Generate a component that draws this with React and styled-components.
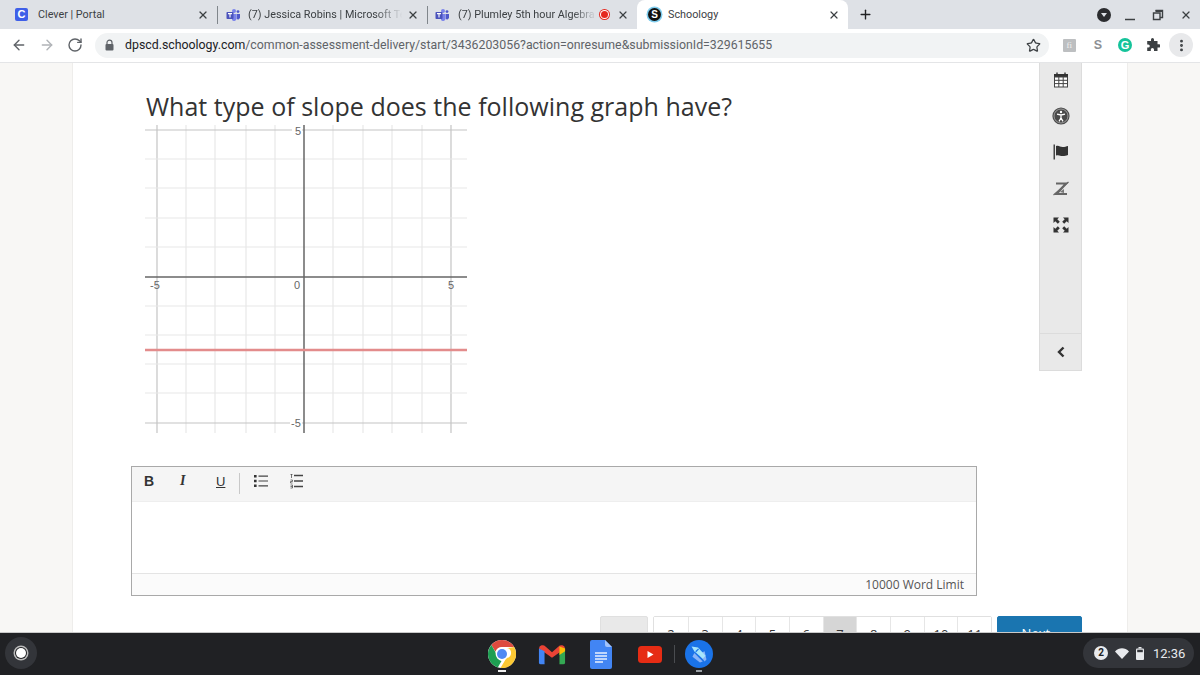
import styled, { createGlobalStyle } from 'styled-components';
import { ArrowLeft, ArrowRight, RotateCw, Star, Plus, X, MoreVertical } from 'lucide-react';

const Global = createGlobalStyle`
  html, body { margin: 0; padding: 0; height: 100%; overflow: hidden; }
  body { font-family: "Liberation Sans", Arial, sans-serif; background: #fff; }
`;

const Screen = styled.div`
  width: 1200px;
  height: 675px;
  display: flex;
  flex-direction: column;
  overflow: hidden;
`;

/* ---------- tab strip ---------- */
const TabStrip = styled.div`
  height: 29px;
  flex: none;
  display: flex;
  align-items: stretch;
  background: #dee1e6;
`;

const Tab = styled.div`
  width: ${p => p.$width}px;
  flex: none;
  box-sizing: border-box;
  display: flex;
  align-items: center;
  padding: 0 8px 0 ${p => p.$pad}px;
  position: relative;
  background: ${p => (p.$active ? '#fff' : 'transparent')};
  border-radius: ${p => (p.$active ? '8px 8px 0 0' : '0')};
  &::after {
    content: '';
    display: ${p => (p.$sep ? 'block' : 'none')};
    position: absolute;
    right: 0;
    top: 6px;
    bottom: 5px;
    width: 1px;
    background: #80868b;
  }
`;

const TabTitle = styled.span`
  flex: 1;
  min-width: 0;
  margin-left: ${p => p.$gap}px;
  font: 10.8px Roboto, sans-serif;
  color: #3c4043;
  white-space: nowrap;
  overflow: hidden;
  ${p => p.$fade && 'mask-image: linear-gradient(90deg, #000 80%, transparent 97%);'}
`;

const TabClose = styled(X)`
  flex: none;
  width: 12px;
  height: 12px;
  color: #3c4043;
  stroke-width: 2.4;
  margin-right: ${p => p.$right || 0}px;
`;

const TabIcon = styled.svg`
  flex: none;
`;

const CleverIcon = styled.span`
  width: 13px;
  height: 13px;
  flex: none;
  border-radius: 2px;
  background: #3f5fe8;
  color: #fff;
  font: bold 11px/13px "Liberation Sans", sans-serif;
  text-align: center;
`;

const SchoologyIcon = styled.span`
  width: 13px;
  height: 13px;
  flex: none;
  border-radius: 50%;
  background: #111;
  box-shadow: 0 0 0 1.5px #7fcdee;
  color: #fff;
  font: bold 10px/13px "Liberation Sans", sans-serif;
  text-align: center;
`;

const RecordDot = styled.span`
  width: 7px;
  height: 7px;
  flex: none;
  margin-right: 9px;
  border-radius: 50%;
  background: #e5281f;
  box-shadow: 0 0 0 1px #fff, 0 0 0 2px #e5281f;
`;

const NewTab = styled(Plus)`
  width: 15px;
  height: 15px;
  margin: 7px 0 0 10px;
  color: #202124;
  stroke-width: 2.2;
`;

const WindowControls = styled.div`
  margin-left: auto;
  display: flex;
  align-items: center;
  padding-right: 8px;
  gap: 16px;
`;

const ProfileDot = styled.span`
  width: 14px;
  height: 14px;
  border-radius: 50%;
  background: #2b2c2f;
  position: relative;
  margin-right: -3px;
  &::after {
    content: '';
    position: absolute;
    left: 3.5px;
    top: 5px;
    border-left: 3.5px solid transparent;
    border-right: 3.5px solid transparent;
    border-top: 4.5px solid #dee1e6;
  }
`;

/* ---------- toolbar ---------- */
const Toolbar = styled.div`
  height: 34px;
  flex: none;
  box-sizing: border-box;
  display: flex;
  align-items: center;
  background: #fff;
  border-bottom: 1px solid #e4e5e7;
  padding: 0 7px 1px 11px;
`;

const NavButton = styled.span`
  width: 16px;
  height: 16px;
  flex: none;
  margin-right: ${p => p.$right}px;
  color: ${p => p.$color};
  display: flex;
  svg { width: 16px; height: 16px; stroke-width: 2.1; }
`;

const Omnibox = styled.div`
  width: 954px;
  height: 25px;
  flex: none;
  box-sizing: border-box;
  margin-left: 4px;
  display: flex;
  align-items: center;
  padding: 0 8px 0 9px;
  border-radius: 13px;
  background: #f1f3f4;
`;

const Url = styled.span`
  margin-left: 10px;
  flex: 1;
  font: 12.33px Roboto, sans-serif;
  color: #5f6368;
  white-space: nowrap;
  b { font-weight: 400; color: #202124; }
`;

const BookmarkStar = styled(Star)`
  width: 15px;
  height: 15px;
  color: #3c4043;
  stroke-width: 2;
`;

const Extensions = styled.div`
  margin-left: auto;
  display: flex;
  align-items: center;
`;

const ExtFi = styled.span`
  width: 13px;
  height: 13px;
  border-radius: 1px;
  background: #bdbfc1;
  color: #f1f1f1;
  font: 9px/13px "Liberation Serif", serif;
  text-align: center;
  margin-right: 18px;
`;

const ExtS = styled.span`
  font: bold 12.5px/14px "Liberation Sans", sans-serif;
  color: #8d9094;
  margin-right: 16px;
`;

const ExtGrammarly = styled.span`
  width: 14px;
  height: 14px;
  border-radius: 50%;
  background: #15c39a;
  color: #fff;
  font: bold 11px/14px "Liberation Sans", sans-serif;
  text-align: center;
  margin-right: 14px;
`;

const MenuButton = styled.span`
  width: 24px;
  height: 24px;
  margin-left: 9px;
  border-radius: 50%;
  background: #e8e9eb;
  color: #3c4043;
  display: flex;
  align-items: center;
  justify-content: center;
  svg { width: 15px; height: 15px; stroke-width: 2.6; }
`;

/* ---------- page ---------- */
const Page = styled.div`
  flex: 1;
  min-height: 0;
  display: flex;
  overflow: hidden;
`;

const Gutter = styled.div`
  flex: 1;
  background: #f8f7f5;
  border-${p => p.$side}: 1px solid #eeedeb;
`;

const Main = styled.main`
  width: 1054px;
  flex: none;
  box-sizing: border-box;
  padding-left: 58px;
  background: #fff;
  display: grid;
  grid-template-columns: 846px 43px;
  column-gap: 62px;
  align-content: start;
`;

const Work = styled.div`
  display: flex;
  flex-direction: column;
`;

const Question = styled.h1`
  margin: 26px 0 0 15px;
  font: 400 25px/34px "Open Sans", sans-serif;
  letter-spacing: 0.02px;
  color: #333;
  white-space: nowrap;
`;

const Graph = styled.svg`
  display: block;
  margin: 0 0 0 14px;
  width: 322px;
  height: 312px;
`;

const Editor = styled.div`
  margin-top: 31px;
  height: 130px;
  box-sizing: border-box;
  border: 1px solid #a9a9a9;
  display: flex;
  flex-direction: column;
`;

const EditorBar = styled.div`
  height: 35px;
  flex: none;
  box-sizing: border-box;
  display: flex;
  align-items: flex-start;
  background: #f5f5f5;
  border-bottom: 1px solid #eee;
  padding: 6px 0 0 12px;
`;

const EditorButton = styled.span`
  width: ${p => p.$width}px;
  height: 16px;
  flex: none;
  display: flex;
  align-items: center;
  color: #333;
  font: ${p => p.$font};
  text-decoration: ${p => (p.$under ? 'underline' : 'none')};
`;

const EditorSep = styled.span`
  width: 1px;
  height: 21px;
  flex: none;
  background: #c8c8c8;
  margin-right: 14px;
`;

const EditorBody = styled.div`
  flex: 1;
  background: #fff;
`;

const EditorFooter = styled.div`
  height: 22px;
  flex: none;
  box-sizing: border-box;
  border-top: 1px solid #e4e4e4;
  background: #fbfbfb;
  font: 12px/21px "Open Sans", sans-serif;
  color: #555;
  text-align: right;
  padding-right: 12px;
`;

const ToolRail = styled.aside`
  align-self: start;
  height: 308px;
  box-sizing: border-box;
  display: flex;
  flex-direction: column;
  align-items: center;
  background: #e9e9e9;
  border: 1px solid #dcdcdc;
  border-top: 0;
`;

const RailTools = styled.div`
  flex: 1;
  padding-top: 9px;
  display: flex;
  flex-direction: column;
  align-items: center;
  gap: 19px;
`;

const RailIcon = styled.svg`
  width: ${p => p.$size || 16}px;
  height: ${p => p.$size || 16}px;
  display: block;
  margin-top: ${p => p.$nudge || 0}px;
`;

const RailToggle = styled.div`
  align-self: stretch;
  height: 36px;
  flex: none;
  border-top: 1px solid #dcdcdc;
  display: flex;
  align-items: center;
  justify-content: center;
`;

const Pager = styled.nav`
  grid-column: 1 / -1;
  justify-self: end;
  margin-top: 20px;
  display: flex;
  height: 40px;
  gap: 5px;
`;

const PagerButton = styled.span`
  width: ${p => p.$width}px;
  box-sizing: border-box;
  border: 1px solid ${p => (p.$primary ? '#1a75b0' : '#e0e0e0')};
  border-radius: 2px;
  background: ${p => (p.$primary ? '#1a75b0' : '#e9e9e9')};
  color: ${p => (p.$primary ? '#fff' : '#333')};
  font: 13px/32px "Open Sans", sans-serif;
  text-align: center;
`;

const Pages = styled.div`
  display: flex;
  border: 1px solid #e0e0e0;
  border-radius: 2px;
`;

const PageNo = styled.span`
  width: 33.7px;
  box-sizing: border-box;
  border-left: ${p => (p.$first ? '0' : '1px solid #e6e6e6')};
  background: ${p => (p.$current ? '#d6d6d6' : '#fff')};
  color: #333;
  font: 13px/34px "Open Sans", sans-serif;
  text-align: center;
`;

/* ---------- shelf ---------- */
const Shelf = styled.footer`
  height: 43px;
  flex: none;
  box-sizing: border-box;
  display: flex;
  align-items: center;
  background: #202124;
  border-top: 1px solid #c9c9c9;
`;

const Launcher = styled.span`
  width: 32px;
  height: 32px;
  margin: 0 0 2px 5px;
  flex: none;
  border-radius: 50%;
  background: #33353a;
  display: flex;
  align-items: center;
  justify-content: center;
  &::after {
    content: '';
    width: 10px;
    height: 10px;
    border-radius: 50%;
    background: #fff;
    box-shadow: 0 0 0 1px #202124, 0 0 0 2.5px #bbb;
  }
`;

const Apps = styled.div`
  margin-left: 451px;
  display: flex;
  align-items: center;
`;

const AppSlot = styled.span`
  width: 28px;
  height: 36px;
  flex: none;
  margin-right: ${p => p.$right}px;
  position: relative;
  display: flex;
  align-items: center;
  justify-content: center;
  &::after {
    content: '';
    display: ${p => (p.$open ? 'block' : 'none')};
    position: absolute;
    bottom: 0;
    left: ${p => (p.$open === 'wide' ? 10 : 11)}px;
    width: ${p => (p.$open === 'wide' ? 8 : 6)}px;
    height: 2px;
    background: ${p => (p.$open === 'wide' ? '#eee' : '#9aa0a6')};
  }
`;

const AppDivider = styled.span`
  width: 1px;
  height: 18px;
  flex: none;
  background: #4a4c50;
  margin-right: 10px;
`;

const StatusPill = styled.div`
  margin: 0 6px 2px auto;
  width: 111px;
  height: 30px;
  box-sizing: border-box;
  border-radius: 15px;
  background: #33353a;
  display: flex;
  align-items: center;
  gap: 7px;
  padding-left: 11px;
`;

const Badge = styled.span`
  width: 14px;
  height: 14px;
  flex: none;
  border-radius: 50%;
  background: #e8eaed;
  color: #202124;
  font: bold 10px/14px Roboto, sans-serif;
  text-align: center;
`;

const Clock = styled.span`
  margin-left: 2px;
  font: 13px Roboto, sans-serif;
  color: #e8eaed;
`;

/* ---------- drawings ---------- */
const TeamsIcon = () => (
  <TabIcon width="14" height="14" viewBox="0 0 14 14">
    <circle cx="8" cy="3" r="2" fill="#7b83eb" />
    <circle cx="12" cy="3.6" r="1.4" fill="#5059c9" />
    <path d="M6 6h4.5v5a2.5 2.5 0 0 1-4.5 1z" fill="#7b83eb" />
    <path d="M10.8 6H14v3.6a2 2 0 0 1-3.2 1.4z" fill="#5059c9" />
    <rect x="0.5" y="4" width="7" height="7" rx="0.8" fill="#4b53bc" />
    <path d="M2 5.6h4M4 5.6v4" stroke="#fff" strokeWidth="1.1" />
  </TabIcon>
);

const LockIcon = () => (
  <TabIcon width="11" height="12" viewBox="0 0 11 12">
    <path d="M3 5.5V3.6a2.5 2.5 0 0 1 5 0v1.9" fill="none" stroke="#5f6368" strokeWidth="1.2" />
    <rect x="1.5" y="5" width="8" height="6.5" rx="1" fill="#5f6368" />
  </TabIcon>
);

const PuzzleIcon = () => (
  <svg width="14" height="14" viewBox="0 0 14 14">
    <path d="M5 1.5a1.5 1.5 0 0 1 3 0V3h3.5v3.2H13a1.6 1.6 0 0 1 0 3.2h-1.5V13H8v-1.5a1.6 1.6 0 0 0-3.2 0V13H1.2V9.6h1a1.6 1.6 0 0 0 0-3.2h-1V3H5z" fill="#3c4043" />
  </svg>
);

const RestoreIcon = () => (
  <svg width="12" height="12" viewBox="0 0 12 12">
    <path d="M3.5 1.5h7v7h-2M1.5 4h6.5v6.5H1.5z" fill="none" stroke="#3c4043" strokeWidth="1.4" />
    <rect x="3.5" y="1" width="7.5" height="2" fill="#3c4043" />
  </svg>
);

const CalendarIcon = () => (
  <RailIcon viewBox="0 0 16 16">
    <path d="M4 0.5v3M12 0.5v3" stroke="#333" strokeWidth="1.4" />
    <rect x="1" y="2" width="14" height="3" fill="#333" />
    <rect x="1.5" y="5" width="13" height="10" fill="#fff" stroke="#444" />
    <path d="M1.5 8.3h13M1.5 11.6h13M5.8 5v10M10.2 5v10" stroke="#444" />
  </RailIcon>
);

const AccessIcon = () => (
  <RailIcon $size={18} viewBox="0 0 18 18">
    <circle cx="9" cy="9" r="8.6" fill="#4a4a4a" />
    <circle cx="9" cy="9" r="7" fill="none" stroke="#bbb" strokeWidth="0.7" />
    <circle cx="9" cy="5" r="1.2" fill="#fff" />
    <path d="M5 7.2l4 .8 4-.8M9 8v3M9 11l-2 3.4M9 11l2 3.4" fill="none" stroke="#fff" strokeWidth="1.3" />
  </RailIcon>
);

const FlagIcon = () => (
  <RailIcon viewBox="0 0 16 16">
    <rect x="0.5" y="0.5" width="1.5" height="15" fill="#444" />
    <path d="M3 2c3-1 4 1 6.5 1S13 2.4 15 2v9c-2 .6-3 1-5.5 1S6 10.5 3 11.5z" fill="#333" />
  </RailIcon>
);

const LineReaderIcon = () => (
  <RailIcon $nudge={2} viewBox="0 0 16 16">
    <path d="M3 2.5h10L3.500 13H14" fill="none" stroke="#666" strokeWidth="2.2" />
    <path d="M0.5 14L15.500 1" stroke="#666" strokeWidth="1.2" />
    <path d="M7 11l4-3v4z" fill="#777" />
  </RailIcon>
);

const ExpandIcon = () => (
  <RailIcon $nudge={1} viewBox="0 0 16 16">
    <path d="M0.5 0.5H6L4.300 2.300l2.500 2.500-2 2-2.500-2.500L0.500 6z" fill="#333" />
    <path d="M15.500 0.500H10l1.700 1.800-2.500 2.500 2 2 2.500-2.500L15.500 6z" fill="#333" />
    <path d="M0.500 15.500H6l-1.700-1.800 2.500-2.500-2-2-2.500 2.500L0.500 10z" fill="#333" />
    <path d="M15.500 15.500H10l1.700-1.800-2.500-2.500 2-2 2.500 2.500L15.500 10z" fill="#333" />
  </RailIcon>
);

const ChevronIcon = () => (
  <svg width="8" height="12" viewBox="0 0 8 12">
    <path d="M6.500 1.500L2 6l4.500 4.500" fill="none" stroke="#333" strokeWidth="2.4" />
  </svg>
);

const ListIcon = () => (
  <svg width="14" height="14" viewBox="0 0 14 14">
    <path d="M0 1h2.600v2.400H0zM0 5.800h2.600v2.400H0zM0 10.600h2.600V13H0z" fill="#333" />
    <path d="M4.500 2.200H14M4.500 7H14M4.500 11.800H14" stroke="#444" strokeWidth="1.2" />
  </svg>
);

const OrderedIcon = () => (
  <svg width="13" height="16" viewBox="0 0 13 16">
    <path d="M0.500 1.500h2M1.500 1v4M0.500 7h2v1.500h-2V10h2M0.500 12h2v3h-2M0.500 13.500h2" fill="none" stroke="#555" strokeWidth="0.8" />
    <path d="M4 2.500h9M4 8h9M4 13.500h9" stroke="#444" strokeWidth="1.3" />
  </svg>
);

const ChromeIcon = () => (
  <svg width="28" height="28" viewBox="0 0 28 28">
    <circle cx="14" cy="14" r="14" fill="#fff" />
    <path d="M14 0a14 14 0 0 1 12.100 7H14a7 7 0 0 0-6.600 4.700L3.400 4.900A14 14 0 0 1 14 0z" fill="#dd4b3e" />
    <path d="M3.400 4.900l5.900 10.600a5 5 0 0 0 4.200 5.400L9.800 27.400A14 14 0 0 1 3.400 4.900z" fill="#1e9e52" />
    <path d="M26.100 7A14 14 0 0 1 12.500 28l5.900-10a5 5 0 0 0 .6-9.900z" fill="#fcc934" />
    <circle cx="14" cy="14" r="6.400" fill="#fff" />
    <circle cx="14" cy="14" r="5" fill="#4f89f3" />
  </svg>
);

const GmailIcon = () => (
  <svg width="30" height="24" viewBox="0 0 30 24">
    <path d="M1 6a4 4 0 0 1 7-2l7 6 7-6a4 4 0 0 1 7 2L15 16z" fill="#ea4335" />
    <path d="M1 6v15a2 2 0 0 0 2 2h4V9z" fill="#4285f4" />
    <path d="M29 6v15a2 2 0 0 1-2 2h-4V9z" fill="#34a853" />
    <path d="M23 4l6 2v3l-6 4z" fill="#fbbc04" />
  </svg>
);

const DocsIcon = () => (
  <svg width="22" height="29" viewBox="0 0 22 29">
    <path d="M2 0h13l7 7v20a2 2 0 0 1-2 2H2a2 2 0 0 1-2-2V2a2 2 0 0 1 2-2z" fill="#4285f4" />
    <path d="M15 0l7 7h-5a2 2 0 0 1-2-2z" fill="#a1c2fa" />
    <path d="M5 13h12M5 16h12M5 19h12M5 22h8" stroke="#e8f0fe" strokeWidth="1.3" />
  </svg>
);

const YoutubeIcon = () => (
  <svg width="24" height="17" viewBox="0 0 24 17">
    <rect width="24" height="17" rx="3.500" fill="#e62c14" />
    <path d="M9.500 5l6 3.500-6 3.500z" fill="#fff" />
  </svg>
);

const RocketIcon = () => (
  <svg width="30" height="30" viewBox="0 0 30 30">
    <circle cx="15" cy="15" r="15" fill="#1a73e8" />
    <path d="M10 14l9 9-3 1-8-6z" fill="#8ab4f8" />
    <path d="M15 15l6-3 2 9-2 2z" fill="#8ab4f8" />
    <path d="M7 7l7 1 8 9-3 3-9-8z" fill="#a6e5fb" />
    <path d="M11 12l3-3 1 1-3 3z" fill="#1a73e8" />
  </svg>
);

const WifiIcon = () => (
  <svg width="14" height="11" viewBox="0 0 14 11">
    <path d="M0 3.400C4-.8 10-.8 14 3.400L7 11z" fill="#e8eaed" />
  </svg>
);

const BatteryIcon = () => (
  <svg width="8" height="13" viewBox="0 0 8 13">
    <rect x="2.500" width="3" height="1.500" fill="#e8eaed" />
    <rect y="1.500" width="8" height="11.500" rx="1" fill="#e8eaed" />
    <rect x="1.200" y="2.700" width="5.600" height="2.500" fill="#33353a" />
  </svg>
);

/* ---------- graph data ---------- */
const xLines = [157, 186, 215, 246, 275, 333, 363, 392, 422, 451];
const yLines = [130, 159, 188, 218, 247, 306, 335, 364, 393, 423];
const GX = 145;
const GY = 123;

const GraphPlot = () => (
  <Graph viewBox="145 123 322 312">
    {xLines.map(x => (
      <line
        key={x}
        x1={x} x2={x} y1={GY + 2} y2={GY + 310}
        stroke={x === 157 || x === 451 ? '#c4c4c4' : '#e8e8e8'}
        strokeWidth="1.2"
      />
    ))}
    {yLines.map(y => (
      <line
        key={y}
        x1={GX} x2={GX + 322} y1={y} y2={y}
        stroke={y === 130 || y === 423 ? '#c4c4c4' : '#e8e8e8'}
        strokeWidth="1.2"
      />
    ))}
    <line x1="304" x2="304" y1={GY + 2} y2={GY + 310} stroke="#666" strokeWidth="1.5" />
    <line x1={GX} x2={GX + 322} y1="277" y2="277" stroke="#666" strokeWidth="1.5" />
    <line x1={GX} x2={GX + 322} y1="350" y2="350" stroke="#e38c8c" strokeWidth="2.6" />
    <g fontFamily="Liberation Sans, sans-serif" fontSize="11" fill="#666">
      <rect x="292" y="125" width="10" height="11" fill="#fff" />
      <text x="295" y="135">5</text>
      <text x="150" y="289">-5</text>
      <text x="294" y="289">0</text>
      <text x="448" y="289">5</text>
      <rect x="290" y="417" width="12" height="11" fill="#fff" />
      <text x="291" y="427">-5</text>
    </g>
  </Graph>
);

const pageNumbers = [2, 3, 4, 5, 6, 7, 8, 9, 10, 11];

export default function App() {
  return (
    <>
      <Global />
      <Screen>
        <TabStrip>
          <Tab $width={218} $pad={15} $sep>
            <CleverIcon>C</CleverIcon>
            <TabTitle $gap={10}>Clever | Portal</TabTitle>
            <TabClose $right={1} />
          </Tab>
          <Tab $width={210} $pad={8} $sep>
            <TeamsIcon />
            <TabTitle $gap={8} $fade>(7) Jessica Robins | Microsoft Teams</TabTitle>
            <TabClose $right={1} />
          </Tab>
          <Tab $width={209} $pad={7}>
            <TeamsIcon />
            <TabTitle $gap={9} $fade>(7) Plumley 5th hour Algebra</TabTitle>
            <RecordDot />
            <TabClose $right={0} />
          </Tab>
          <Tab $width={211} $pad={11} $active>
            <SchoologyIcon>S</SchoologyIcon>
            <TabTitle $gap={7}>Schoology</TabTitle>
            <TabClose $right={0} />
          </Tab>
          <NewTab />
          <WindowControls>
            <ProfileDot />
            <svg width="12" height="12" viewBox="0 0 12 12"><path d="M1 10.5h10" stroke="#3c4043" strokeWidth="1.5" /></svg>
            <RestoreIcon />
            <TabClose />
          </WindowControls>
        </TabStrip>

        <Toolbar>
          <NavButton $right={12} $color="#5f6368"><ArrowLeft /></NavButton>
          <NavButton $right={12} $color="#b0b3b7"><ArrowRight /></NavButton>
          <NavButton $right={8} $color="#5f6368"><RotateCw /></NavButton>
          <Omnibox>
            <LockIcon />
            <Url><b>dpscd.schoology.com</b>/common-assessment-delivery/start/3436203056?action=onresume&amp;submissionId=329615655</Url>
            <BookmarkStar />
          </Omnibox>
          <Extensions>
            <ExtFi>fi</ExtFi>
            <ExtS>S</ExtS>
            <ExtGrammarly>G</ExtGrammarly>
            <PuzzleIcon />
            <MenuButton><MoreVertical /></MenuButton>
          </Extensions>
        </Toolbar>

        <Page>
          <Gutter $side="right" />
          <Main>
            <Work>
              <Question>What type of slope does the following graph have?</Question>
              <GraphPlot />
              <Editor>
                <EditorBar>
                  <EditorButton $width={36} $font='bold 14px "Liberation Sans", sans-serif'>B</EditorButton>
                  <EditorButton $width={36} $font='italic bold 14px "Liberation Serif", serif'>I</EditorButton>
                  <EditorButton $width={23} $under $font='13px "Liberation Sans", sans-serif'>U</EditorButton>
                  <EditorSep />
                  <EditorButton $width={36}><ListIcon /></EditorButton>
                  <EditorButton $width={20}><OrderedIcon /></EditorButton>
                </EditorBar>
                <EditorBody />
                <EditorFooter>10000 Word Limit</EditorFooter>
              </Editor>
            </Work>
            <ToolRail>
              <RailTools>
                <CalendarIcon />
                <AccessIcon />
                <FlagIcon />
                <LineReaderIcon />
                <ExpandIcon />
              </RailTools>
              <RailToggle><ChevronIcon /></RailToggle>
            </ToolRail>
            <Pager>
              <PagerButton $width={48}>‹</PagerButton>
              <Pages>
                {pageNumbers.map((n, i) => (
                  <PageNo key={n} $first={i === 0} $current={n === 7}>{n}</PageNo>
                ))}
              </Pages>
              <PagerButton $width={85} $primary>Next ›</PagerButton>
            </Pager>
          </Main>
          <Gutter $side="left" />
        </Page>

        <Shelf>
          <Launcher />
          <Apps>
            <AppSlot $right={22} $open="wide"><ChromeIcon /></AppSlot>
            <AppSlot $right={21}><GmailIcon /></AppSlot>
            <AppSlot $right={21}><DocsIcon /></AppSlot>
            <AppSlot $right={10}><YoutubeIcon /></AppSlot>
            <AppDivider />
            <AppSlot $right={0} $open="small"><RocketIcon /></AppSlot>
          </Apps>
          <StatusPill>
            <Badge>2</Badge>
            <WifiIcon />
            <BatteryIcon />
            <Clock>12:36</Clock>
          </StatusPill>
        </Shelf>
      </Screen>
    </>
  );
}
